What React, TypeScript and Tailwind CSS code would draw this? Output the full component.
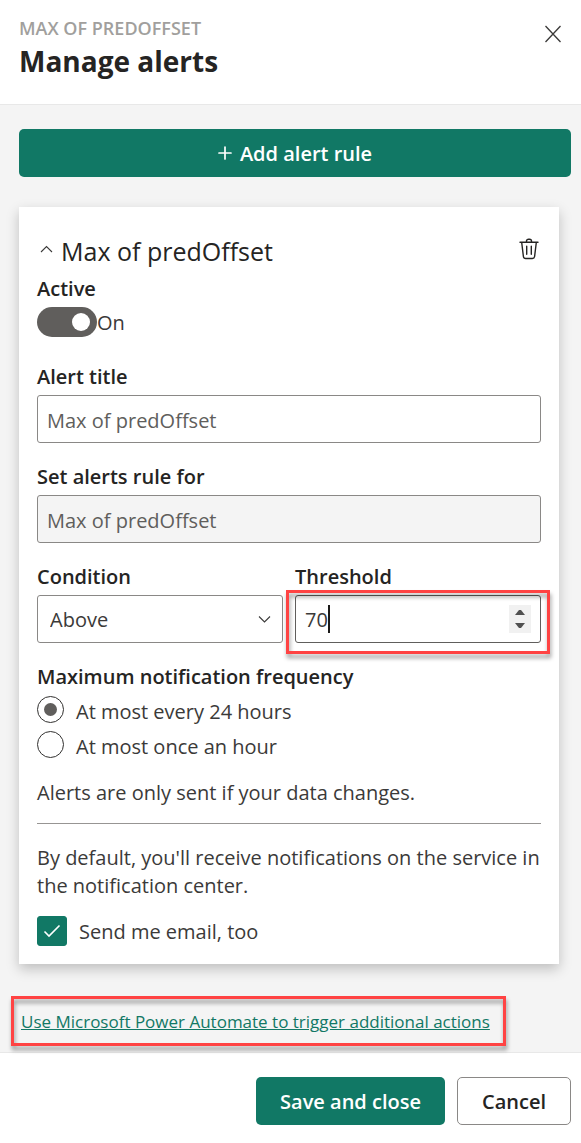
import { useState, type ReactNode } from "react";

const labelClass = "block text-[20px] leading-7 font-semibold text-[#252423]";
const fieldClass =
  "h-12 w-full rounded-[3px] border border-[#8a8886] px-[9px] pt-0.5 text-[20px] text-[#605e5c]";

function Callout({ className }: { className: string }) {
  return (
    <span
      aria-hidden="true"
      className={`pointer-events-none absolute border-[3px] border-[#ff4343] drop-shadow-[1px_4px_2px_rgba(0,0,0,0.4)] ${className}`}
    />
  );
}

function Field({ id, label, children }: { id: string; label: string; children: ReactNode }) {
  return (
    <div className="flex min-w-0 flex-1 flex-col gap-1">
      <label htmlFor={id} className={labelClass}>
        {label}
      </label>
      {children}
    </div>
  );
}

function Frequency({ value, current, onPick, children }: {
  value: string;
  current: string;
  onPick: (v: string) => void;
  children: ReactNode;
}) {
  return (
    <label className="flex h-[35px] items-start gap-3 pt-[3px] text-[20px] leading-8 text-[#3b3a39]">
      <input
        type="radio"
        name="frequency"
        value={value}
        checked={current === value}
        onChange={() => onPick(value)}
        className="grid size-[27px] shrink-0 appearance-none place-items-center rounded-full border border-[#323130] before:size-[13px] before:rounded-full checked:before:bg-[#605e5c]"
      />
      {children}
    </label>
  );
}

export default function App() {
  const [active, setActive] = useState(true);
  const [title, setTitle] = useState("Max of predOffset");
  const [threshold, setThreshold] = useState(70);
  const [frequency, setFrequency] = useState("day");
  const [email, setEmail] = useState(true);

  return (
    <div className="bg-white font-['Open_Sans','Noto_Sans',sans-serif] text-[#252423]">
      <header className="flex items-start justify-between border-b border-[#e8e8e8] px-[19px] pt-4 pb-[22px]">
        <div>
          <p className="text-[18px] leading-6 font-semibold text-[#a19f9d]">MAX OF PREDOFFSET</p>
          <h1 className="text-[28px] leading-[42px] font-bold">Manage alerts</h1>
        </div>
        <button type="button" aria-label="Close" className="mt-2">
          <svg width="18" height="20" viewBox="0 0 18 20" fill="none" stroke="#3b3a39" strokeWidth="1.3">
            <path d="M1.500 2 16.500 18M16.500 2 1.500 18" />
          </svg>
        </button>
      </header>

      <main className="bg-[#f4f4f4] pt-6 pr-[10px] pb-4 pl-[19px]">
        <button
          type="button"
          className="flex h-12 w-full items-center justify-center gap-2 rounded-[5px] bg-[#117865] text-[20px] font-semibold text-white"
        >
          <svg width="14" height="14" viewBox="0 0 14 14" stroke="currentColor" strokeWidth="1.7" strokeLinecap="round">
            <path d="M7 1v12M1 7h12" />
          </svg>
          <span className="pt-0.5">Add alert rule</span>
        </button>

        <section className="mt-[30px] mr-3 bg-white px-[18px] pt-6 pb-[18px] shadow-[0_5px_12px_rgba(0,0,0,0.22)]">
          <div className="flex h-10 items-center justify-between">
            <h2 className="text-[25px] leading-9">
              <button type="button" aria-expanded="true" className="flex items-center gap-2 pl-[3px]">
                <svg className="mb-1" width="13" height="9" viewBox="0 0 13 9" fill="none" stroke="#3b3a39" strokeWidth="1.1">
                  <path d="M1 7 6.500 1.500 12 7" />
                </svg>
                Max of predOffset
              </button>
            </h2>
            <button type="button" aria-label="Delete alert" className="mr-0.5 mb-1">
              <svg width="20" height="22" viewBox="0 0 20 22" fill="none" stroke="#252423" strokeWidth="1.4" strokeLinecap="round">
                <path d="M1 4.200h18M7.500 4V3a2 1.800 0 0 1 2-1.800h1a2 1.800 0 0 1 2 1.800v1M2.700 4.500l1.700 14a2.300 2.300 0 0 0 2.300 2h6.600a2.300 2.300 0 0 0 2.300-2l1.700-14M7.700 8.200v8M12.300 8.200v8" />
              </svg>
            </button>
          </div>

          <div className="mt-1 flex flex-col gap-1">
            <label htmlFor="active" className={labelClass}>
              Active
            </label>
            <div className="flex items-center">
              <input
                id="active"
                type="checkbox"
                role="switch"
                checked={active}
                onChange={(e) => setActive(e.target.checked)}
                className="flex h-[30px] w-[60px] appearance-none items-center rounded-full bg-[#8a8886] px-[7px] before:size-[18px] before:rounded-full before:bg-white checked:justify-end checked:bg-[#605e5c]"
              />
              <span className="pt-0.5 text-[20px] leading-7 text-[#3b3a39]">{active ? "On" : "Off"}</span>
            </div>
          </div>

          <div className="mt-[26px] flex flex-col gap-5">
            <Field id="title" label="Alert title">
              <input id="title" type="text" value={title} onChange={(e) => setTitle(e.target.value)} className={fieldClass} />
            </Field>
            <Field id="rule-for" label="Set alerts rule for">
              <input id="rule-for" type="text" readOnly value="Max of predOffset" className={`${fieldClass} bg-[#f4f4f4]`} />
            </Field>
            <div className="flex gap-3">
              <Field id="condition" label="Condition">
                <div className="relative">
                  <select
                    id="condition"
                    className="h-12 w-full appearance-none rounded-[3px] border border-[#8a8886] bg-white px-3 pt-0.5 text-[20px] text-[#3b3a39]"
                  >
                    <option>Above</option>
                    <option>Below</option>
                  </select>
                  <svg
                    className="pointer-events-none absolute top-5 right-3"
                    width="13"
                    height="9"
                    viewBox="0 0 13 9"
                    fill="none"
                    stroke="#3b3a39"
                    strokeWidth="1.1"
                  >
                    <path d="M1 1.500 6.500 7 12 1.500" />
                  </svg>
                </div>
              </Field>
              <Field id="threshold" label="Threshold">
                <div className="relative flex h-12 items-center rounded-[3px] border border-[#605e5c] pr-[9px] pl-[9px]">
                  <input
                    id="threshold"
                    type="number"
                    value={threshold}
                    onChange={(e) => setThreshold(Number(e.target.value))}
                    className="[appearance:textfield] [field-sizing:content] pt-0.5 text-[20px] text-[#3b3a39] outline-none [&::-webkit-inner-spin-button]:appearance-none"
                  />
                  <span aria-hidden="true" className="h-7 w-0.5 bg-[#1b1a19]" />
                  <div className="ml-auto flex h-7 w-[22px] flex-col bg-[#f1f1f1]">
                    <button
                      type="button"
                      aria-label="Increase threshold"
                      onClick={() => setThreshold(threshold + 1)}
                      className="flex flex-1 items-end justify-center pb-1"
                    >
                      <svg width="10" height="5" viewBox="0 0 10 5" fill="#505050">
                        <path d="M0 5 4 0h2l4 5z" />
                      </svg>
                    </button>
                    <button
                      type="button"
                      aria-label="Decrease threshold"
                      onClick={() => setThreshold(threshold - 1)}
                      className="flex flex-1 items-start justify-center pt-1"
                    >
                      <svg width="10" height="5" viewBox="0 0 10 5" fill="#505050">
                        <path d="M0 0 4 5h2l4-5z" />
                      </svg>
                    </button>
                  </div>
                  <Callout className="-top-1.5 -right-2.5 -bottom-3 -left-2.5" />
                </div>
              </Field>
            </div>
            <fieldset>
              <legend className={`${labelClass} mb-0.5`}>Maximum notification frequency</legend>
              <Frequency value="day" current={frequency} onPick={setFrequency}>
                At most every 24 hours
              </Frequency>
              <Frequency value="hour" current={frequency} onPick={setFrequency}>
                At most once an hour
              </Frequency>
            </fieldset>
          </div>

          <p className="mt-4 text-[20px] leading-7 text-[#3b3a39]">Alerts are only sent if your data changes.</p>
          <hr className="mt-4 border-[#979593]" />
          <p className="mt-5 text-[20px] leading-7 text-[#3b3a39]">
            By default, you'll receive notifications on the service in the notification center.
          </p>
          <label className="mt-4 flex items-center gap-3 text-[20px] leading-7 text-[#3b3a39]">
            <span className="grid size-[30px] place-items-center">
              <input
                type="checkbox"
                checked={email}
                onChange={(e) => setEmail(e.target.checked)}
                className="col-start-1 row-start-1 size-[30px] appearance-none rounded-[3px] border border-[#117865] checked:bg-[#117865]"
              />
              <svg
                className="pointer-events-none col-start-1 row-start-1"
                width="18"
                height="14"
                viewBox="0 0 18 14"
                fill="none"
                stroke="white"
                strokeWidth="1.600"
              >
                <path d="M1.500 7.500 6 12 16.500 1.500" />
              </svg>
            </span>
            <span className="pt-0.5">Send me email, too</span>
          </label>
        </section>

        <div className="mt-11 flex">
          <a href="#power-automate" className="relative ml-0.5 text-[17px] leading-7 text-[#117865] underline">
            Use Microsoft Power Automate to trigger additional actions
            <Callout className="-top-3 -right-4 -bottom-2.5 -left-2.5" />
          </a>
        </div>
      </main>

      <footer className="flex justify-end gap-3 border-t border-[#e8e8e8] pt-6 pr-[10px] pb-[18px]">
        <button type="button" className="h-12 rounded-[5px] bg-[#117865] px-6 pt-0.5 text-[20px] font-semibold text-white">
          Save and close
        </button>
        <button type="button" className="h-12 rounded-[5px] border border-[#8a8886] px-6 pt-0.5 text-[20px] font-semibold text-[#252423]">
          Cancel
        </button>
      </footer>
    </div>
  );
}
